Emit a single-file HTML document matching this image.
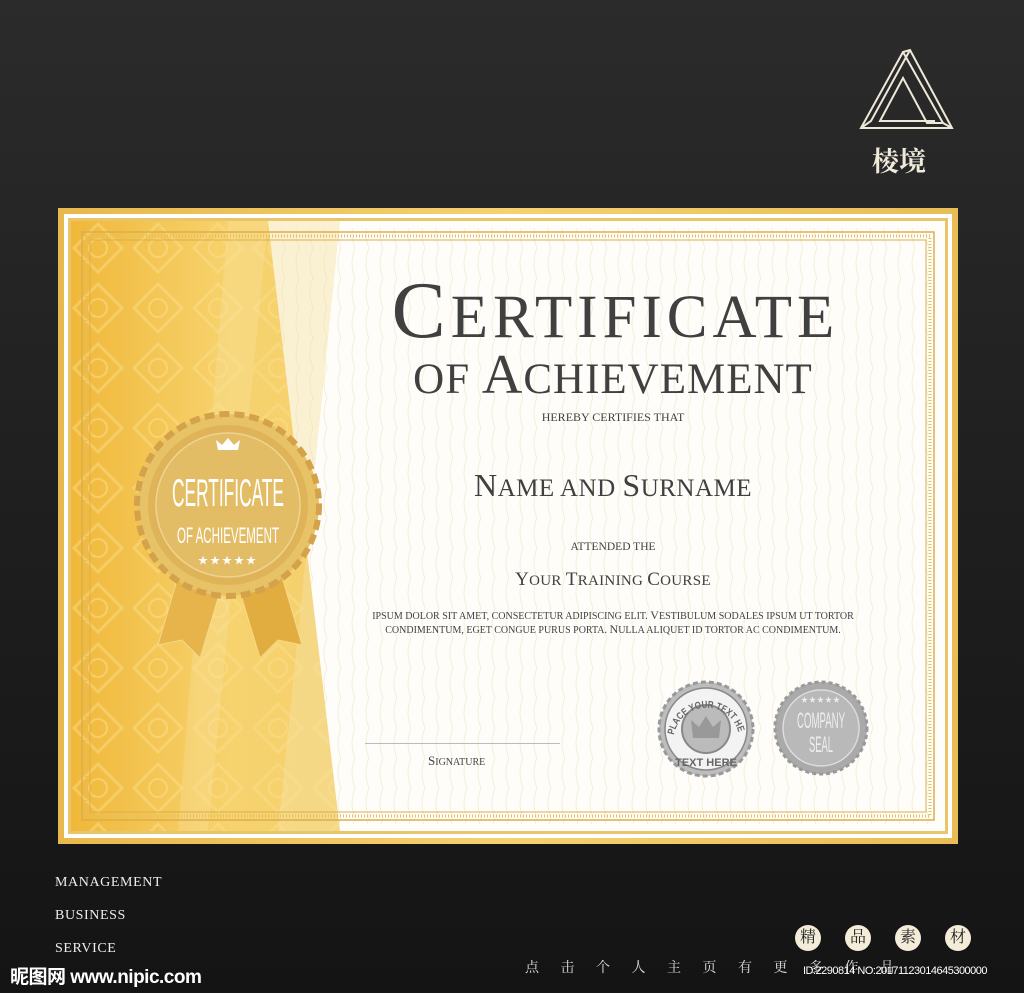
<!DOCTYPE html>
<html><head><meta charset="utf-8"><style>
*{margin:0;padding:0;box-sizing:border-box}
body{width:1024px;height:993px;overflow:hidden;background:linear-gradient(180deg,#2b2b2b 0%,#1f1f1f 50%,#141414 100%);font-family:"Liberation Serif","Noto Serif CJK SC",serif;position:relative}
.a{position:absolute}
.t{position:absolute;left:340px;width:546px;text-align:center;color:#404040;text-transform:uppercase;white-space:nowrap}
.w{color:#eee;font-size:14px;letter-spacing:.6px;position:absolute;left:55px}
.dot{position:absolute;top:925px;width:26px;height:26px;border-radius:50%;background:#f3ecd8;color:#222;font-size:16px;text-align:center;line-height:26px}
</style></head><body>
<svg class="a" style="left:855px;top:45px" width="100" height="90" viewBox="0 0 100 90" fill="none" stroke="#eee8d8" stroke-width="2">
<path d="M55 5 L97 83 L6 83 L48 7 Z"/><path d="M48 7 L88 78 L72 78 L48 33 L25 76 L80 76"/><path d="M55 5 L16 76 L6 83"/><path d="M88 78 L97 83"/>
</svg>
<div class="a" style="left:872px;top:140px;font-size:27px;color:#f0eadb;font-family:'Noto Serif CJK SC',serif;font-weight:bold">棱境</div>

<div class="a" style="left:58px;top:208px;width:900px;height:636px;background:linear-gradient(90deg,#e8b84c,#f5d170 50%,#e8bd55)"></div>
<div class="a" style="left:64px;top:214px;width:888px;height:624px;background:#fff"></div>
<div class="a" style="left:68px;top:218px;width:880px;height:616px;background:#fefdfa;border:3px solid #e9c56a"></div>
<svg class="a" style="left:68px;top:218px" width="880" height="616">
<defs><pattern id="p" width="14" height="30" patternUnits="userSpaceOnUse"><path d="M7 0 Q1 15 7 30" stroke="#f2ead2" stroke-width=".8" fill="none"/></pattern>
<linearGradient id="g" x1="0" x2="1"><stop offset="0" stop-color="#f0b83a"/><stop offset=".6" stop-color="#f7d36e"/><stop offset="1" stop-color="#f4cf6c"/></linearGradient>
<pattern id="d" width="60" height="60" patternUnits="userSpaceOnUse"><path d="M30 6 L54 30 L30 54 L6 30Z" fill="none" stroke="#fbe08f" stroke-width="3" opacity=".45"/><circle cx="30" cy="30" r="9" fill="none" stroke="#fbe08f" stroke-width="2" opacity=".5"/></pattern></defs>
<rect x="10" y="10" width="860" height="596" fill="url(#p)"/>
<path d="M3 3 L200 3 L272 613 L3 613Z" fill="url(#g)"/>
<path d="M3 3 L200 3 L272 613 L3 613Z" fill="url(#d)"/>
<path d="M200 3 L272 3 L210 613 L272 613Z" fill="#f6e2a5" opacity=".45"/>
<path d="M160 3 L200 3 L140 613 L110 613Z" fill="#f7e4a8" opacity=".3"/>
<rect x="14" y="14" width="852" height="588" fill="none" stroke="#dcae4c" stroke-width="1.5"/>
<rect x="18" y="18" width="844" height="580" fill="none" stroke="#e4be62" stroke-width="3" stroke-dasharray="1 2"/>
<rect x="22" y="22" width="836" height="572" fill="none" stroke="#dcae4c" stroke-width="1"/>
</svg>
<svg class="a" style="left:130px;top:410px" width="200" height="260" viewBox="0 0 200 260">
<path d="M50 160 L28 235 L52 230 L70 248 L92 175Z" fill="#e6b44a" stroke="#f6d98a"/>
<path d="M150 160 L172 235 L148 230 L130 248 L108 175Z" fill="#e2ad40" stroke="#f6d98a"/>
<circle cx="98" cy="95" r="91" fill="#e7c266" stroke="#d3a24a" stroke-width="6" stroke-dasharray="10 5"/>
<circle cx="98" cy="95" r="80" fill="#dfb459"/>
<circle cx="98" cy="95" r="72" fill="#e3bd66" stroke="#f0d390" stroke-width="1.5"/>
<path d="M88 40 L86 30 L92 35 L98 28 L104 35 L110 30 L108 40Z" fill="#fff"/>
<text x="98" y="96" text-anchor="middle" font-family="Liberation Sans Narrow,Liberation Sans,sans-serif" font-size="31" fill="#fff" transform="scale(1,1.25) translate(0,-19)" textLength="112" lengthAdjust="spacingAndGlyphs">CERTIFICATE</text>
<text x="98" y="133" text-anchor="middle" font-family="Liberation Sans Narrow,Liberation Sans,sans-serif" font-size="22" fill="#fff" textLength="102" lengthAdjust="spacingAndGlyphs">OF ACHIEVEMENT</text>
<text x="98" y="154" text-anchor="middle" font-size="10" fill="#fff" letter-spacing="2">★★★★★</text>
</svg>

<div class="t" style="top:264px;font-size:61px;letter-spacing:5px;padding-left:5px"><span style="font-size:81px">C</span>ertificate</div>
<div class="t" style="top:343px;font-size:43px;letter-spacing:1px"><span style="font-size:43px">of </span><span style="font-size:56px">A</span>chievement</div>
<div class="t" style="top:410px;font-size:12px">hereby certifies that</div>
<div class="t" style="top:467px;font-size:25px;letter-spacing:.5px"><span style="font-size:32px">N</span>ame and <span style="font-size:32px">S</span>urname</div>
<div class="t" style="top:541px;font-size:11.5px">attended the</div>
<div class="t" style="top:569px;font-size:15px;letter-spacing:.3px"><span style="font-size:19px">Y</span>our <span style="font-size:19px">T</span>raining <span style="font-size:19px">C</span>ourse</div>
<div class="t" style="top:609px;font-size:10px;line-height:13px">ipsum dolor sit amet, consectetur adipiscing elit. <span style="font-size:12px">V</span>estibulum sodales ipsum ut tortor<br>condimentum, eget congue purus porta. <span style="font-size:12px">N</span>ulla aliquet id tortor ac condimentum.</div>
<div class="a" style="left:365px;top:743px;width:195px;height:1px;background:#bbb"></div>
<div class="a" style="left:428px;top:753px;font-size:10px;color:#444;text-transform:uppercase"><span style="font-size:13px">S</span>ignature</div>

<svg class="a" style="left:655px;top:680px" width="215" height="100">
<circle cx="51" cy="49" r="47" fill="#bdbdbd" stroke="#999" stroke-width="3" stroke-dasharray="5 3"/>
<circle cx="51" cy="49" r="41" fill="#f3f3f3" stroke="#888" stroke-width="1.5"/>
<circle cx="51" cy="49" r="24" fill="#bbb" stroke="#888" stroke-width="2"/>
<path d="M38 58 L36 40 L44 47 L51 36 L58 47 L66 40 L64 58Z" fill="#999"/>
<path id="arc" d="M19 55 A33 33 0 0 1 84 55" fill="none"/>
<text font-family="Liberation Sans Narrow,Liberation Sans,sans-serif" font-size="10" font-weight="bold" fill="#666"><textPath href="#arc" textLength="100" lengthAdjust="spacingAndGlyphs">PLACE YOUR TEXT HERE</textPath></text>
<text x="51" y="86" text-anchor="middle" font-family="Liberation Sans Narrow,Liberation Sans,sans-serif" font-size="11" font-weight="bold" fill="#666">TEXT HERE</text>
<circle cx="166" cy="48" r="46" fill="#aaa" stroke="#999" stroke-width="3" stroke-dasharray="4 3"/>
<circle cx="166" cy="48" r="38" fill="#b9b9b9" stroke="#ddd" stroke-width="1.5"/>
<text x="166" y="48" text-anchor="middle" font-family="Liberation Sans Narrow,Liberation Sans,sans-serif" font-size="22" fill="#eee" textLength="48" lengthAdjust="spacingAndGlyphs">COMPANY</text>
<text x="166" y="72" text-anchor="middle" font-family="Liberation Sans Narrow,Liberation Sans,sans-serif" font-size="22" fill="#eee" textLength="24" lengthAdjust="spacingAndGlyphs">SEAL</text>
<text x="166" y="22" text-anchor="middle" font-size="7" fill="#eee" letter-spacing="1">★★★★★</text>
</svg>

<div class="w" style="top:875px">MANAGEMENT</div>
<div class="w" style="top:908px">BUSINESS</div>
<div class="w" style="top:941px">SERVICE</div>
<div class="a" style="left:10px;top:962px;color:#fff;font-family:'Liberation Sans','Noto Sans CJK SC',sans-serif;font-weight:bold;font-size:19px;letter-spacing:-.5px">昵图网 www.nipic.com</div>
<div class="dot" style="left:795px">精</div><div class="dot" style="left:845px">品</div><div class="dot" style="left:895px">素</div><div class="dot" style="left:945px">材</div>
<div class="a" style="left:525px;top:957px;color:#ddd;font-size:14px;letter-spacing:21.5px">点击个人主页有更多作品</div>
<div class="a" style="left:803px;top:965px;color:#fff;font-family:'Liberation Sans',sans-serif;font-size:11px;letter-spacing:-.5px">ID:2290814 NO:20171123014645300000</div>
</body></html>
